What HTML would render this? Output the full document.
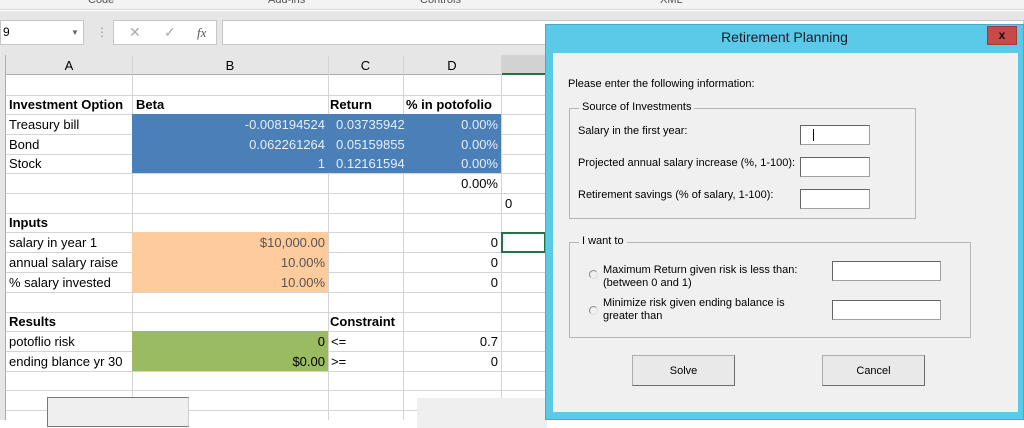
<!DOCTYPE html>
<html><head><style>
*{margin:0;padding:0;box-sizing:border-box}
body{width:1024px;height:420px;overflow:hidden;background:#fff;font-family:"Liberation Sans",sans-serif;position:relative}
.a{position:absolute;white-space:nowrap}
.c{position:absolute;font-size:13px;line-height:19px;color:#000}
.r{text-align:right}
.b{font-weight:bold}
.hl{position:absolute;height:1px;background:#d4d4d4;left:6px;width:540px}
.vl{position:absolute;width:1px;background:#d4d4d4;top:56px;height:364px}
.d{font-size:11px;color:#000;position:absolute;white-space:nowrap}
.in{position:absolute;background:#fff;border:1px solid #a0a0a0;border-top-color:#646464;border-left-color:#646464}
.btn{position:absolute;background:#e9e9e9;border:1px solid #adadad;border-right-color:#6e6e6e;border-bottom-color:#6e6e6e;font-size:11px;text-align:center;line-height:31px}
</style></head><body>
<div class="a" style="left:0;top:0;width:1024px;height:10px;background:#f3f3f3;border-bottom:1px solid #d6d6d6"></div>
<div class="a" style="left:88px;top:-6px;font-size:11px;color:#555">Code</div>
<div class="a" style="left:268px;top:-6px;font-size:11px;color:#555">Add-ins</div>
<div class="a" style="left:420px;top:-6px;font-size:11px;color:#555">Controls</div>
<div class="a" style="left:660px;top:-6px;font-size:11px;color:#555">XML</div>
<div class="a" style="left:0;top:11px;width:1024px;height:45px;background:#e6e6e6"></div>
<div class="a" style="left:0;top:20px;width:84px;height:25px;background:#fff;border:1px solid #c6c6c6;font-size:12px;line-height:23px;padding-left:2px">9<span style="position:absolute;left:70px;font-size:8px;color:#666">▼</span></div>
<div class="a" style="left:96px;top:25px;color:#999;font-size:12px">⋮</div>
<div class="a" style="left:113px;top:20px;width:104px;height:25px;background:#fff;border:1px solid #c6c6c6;font-size:14px;line-height:23px;color:#aaa"><span style="position:absolute;left:15px">✕</span><span style="position:absolute;left:50px">✓</span><span style="position:absolute;left:83px;font-style:italic;font-family:'Liberation Serif';color:#555;font-size:13px">fx</span></div>
<div class="a" style="left:222px;top:20px;width:802px;height:25px;background:#fff;border:1px solid #c6c6c6"></div>
<div class="a" style="left:0;top:55px;width:1024px;height:20px;background:#e6e6e6;border-bottom:1px solid #ababab"></div>
<div class="a" style="left:0;top:55px;width:6px;height:365px;background:#e6e6e6;border-right:1px solid #ababab"></div>
<div class="a" style="left:501px;top:55px;width:45px;height:20px;background:#d2d2d2;border-bottom:2px solid #217346"></div>
<div class="c" style="left:6px;top:56px;width:126px;text-align:center">A</div>
<div class="c" style="left:132px;top:56px;width:196px;text-align:center">B</div>
<div class="c" style="left:328px;top:56px;width:75px;text-align:center">C</div>
<div class="c" style="left:403px;top:56px;width:98px;text-align:center">D</div>
<div class="hl" style="top:95px"></div><div class="hl" style="top:114px"></div><div class="hl" style="top:134px"></div><div class="hl" style="top:154px"></div><div class="hl" style="top:173px"></div><div class="hl" style="top:193px"></div><div class="hl" style="top:213px"></div><div class="hl" style="top:232px"></div><div class="hl" style="top:252px"></div><div class="hl" style="top:272px"></div><div class="hl" style="top:292px"></div><div class="hl" style="top:312px"></div><div class="hl" style="top:331px"></div><div class="hl" style="top:351px"></div><div class="hl" style="top:371px"></div><div class="hl" style="top:390px"></div><div class="hl" style="top:410px"></div>
<div class="vl" style="left:132px"></div><div class="vl" style="left:328px"></div><div class="vl" style="left:403px"></div><div class="vl" style="left:501px"></div>
<div class="a" style="left:132px;top:114px;width:369px;height:59px;background:#4a7fb8"></div>
<div class="a" style="left:132px;top:232px;width:196px;height:60px;background:#fecb9c"></div>
<div class="a" style="left:132px;top:331px;width:196px;height:40px;background:#9bbb62"></div>
<div class="a" style="left:501px;top:232px;width:45px;height:21px;border:2px solid #217346"></div>
<div class="c b" style="left:9px;top:95px">Investment Option</div>
<div class="c b" style="left:136px;top:95px">Beta</div>
<div class="c b" style="left:330px;top:95px">Return</div>
<div class="c b" style="left:406px;top:95px">% in potofolio</div>
<div class="c" style="left:9px;top:115px">Treasury bill</div>
<div class="c" style="left:9px;top:135px">Bond</div>
<div class="c" style="left:9px;top:154px">Stock</div>
<div class="c r" style="left:132px;top:115px;width:193px;color:#e8eef6">-0.008194524</div>
<div class="c r" style="left:132px;top:135px;width:193px;color:#e8eef6">0.062261264</div>
<div class="c r" style="left:132px;top:154px;width:193px;color:#e8eef6">1</div>
<div class="c" style="left:336px;top:115px;color:#e8eef6">0.03735942</div>
<div class="c" style="left:336px;top:135px;color:#e8eef6">0.05159855</div>
<div class="c" style="left:336px;top:154px;color:#e8eef6">0.12161594</div>
<div class="c r" style="left:403px;top:115px;width:95px;color:#e8eef6">0.00%</div>
<div class="c r" style="left:403px;top:135px;width:95px;color:#e8eef6">0.00%</div>
<div class="c r" style="left:403px;top:154px;width:95px;color:#e8eef6">0.00%</div>
<div class="c r" style="left:403px;top:174px;width:95px">0.00%</div>
<div class="c" style="left:505px;top:194px">0</div>
<div class="c b" style="left:9px;top:213px">Inputs</div>
<div class="c" style="left:9px;top:233px">salary in year 1</div>
<div class="c" style="left:9px;top:253px">annual salary raise</div>
<div class="c" style="left:9px;top:273px">% salary invested</div>
<div class="c r" style="left:132px;top:233px;width:193px;color:#555">$10,000.00</div>
<div class="c r" style="left:132px;top:253px;width:193px;color:#555">10.00%</div>
<div class="c r" style="left:132px;top:273px;width:193px;color:#555">10.00%</div>
<div class="c r" style="left:403px;top:233px;width:95px">0</div>
<div class="c r" style="left:403px;top:253px;width:95px">0</div>
<div class="c r" style="left:403px;top:273px;width:95px">0</div>
<div class="c b" style="left:9px;top:312px">Results</div>
<div class="c b" style="left:330px;top:312px">Constraint</div>
<div class="c" style="left:9px;top:332px">potoflio risk</div>
<div class="c" style="left:9px;top:352px">ending blance yr 30</div>
<div class="c r" style="left:132px;top:332px;width:193px">0</div>
<div class="c r" style="left:132px;top:352px;width:193px">$0.00</div>
<div class="c" style="left:331px;top:332px">&lt;=</div>
<div class="c" style="left:331px;top:352px">&gt;=</div>
<div class="c r" style="left:403px;top:332px;width:95px">0.7</div>
<div class="c r" style="left:403px;top:352px;width:95px">0</div>
<div class="a" style="left:47px;top:397px;width:142px;height:30px;background:#efefef;border:1px solid #777;border-right-color:#ccc"></div>
<div class="a" style="left:417px;top:398px;width:130px;height:30px;background:#efefef"></div>
<div class="a" style="left:545px;top:24px;width:479px;height:396px;background:#5bcae8;border:1px solid #4aa8c8"></div>
<div class="a" style="left:545px;top:29px;width:479px;text-align:center;font-size:14px;color:#1a1a2a">Retirement Planning</div>
<div class="a" style="left:987px;top:26px;width:30px;height:19px;background:#c74a48;border:1px solid #a03a38;color:#111;font-weight:bold;font-size:12px;text-align:center;line-height:17px">x</div>
<div class="a" style="left:553px;top:53px;width:465px;height:359px;background:#f0f0f0"></div>
<div class="d" style="left:568px;top:78px">Please enter the following information:</div>
<div class="a" style="left:569px;top:108px;width:347px;height:111px;border:1px solid #b5b5b5"></div>
<div class="d" style="left:579px;top:101px;background:#f0f0f0;padding:0 3px">Source of Investments</div>
<div class="d" style="left:578px;top:125px">Salary in the first year:</div>
<div class="d" style="left:578px;top:157px">Projected annual salary increase (%, 1-100):</div>
<div class="d" style="left:578px;top:189px">Retirement savings (% of salary, 1-100):</div>
<div class="in" style="left:800px;top:125px;width:70px;height:20px"><div style="position:absolute;left:12px;top:3px;width:1px;height:12px;background:#000"></div></div>
<div class="in" style="left:800px;top:157px;width:70px;height:20px"></div>
<div class="in" style="left:800px;top:189px;width:70px;height:20px"></div>
<div class="a" style="left:569px;top:242px;width:402px;height:96px;border:1px solid #b5b5b5"></div>
<div class="d" style="left:579px;top:235px;background:#f0f0f0;padding:0 3px">I want to</div>
<div class="a" style="left:589px;top:270px;width:9px;height:9px;border-radius:50%;border:1px solid #888;border-right-color:#ddd;border-bottom-color:#ddd"></div>
<div class="d" style="left:603px;top:264px;line-height:13px">Maximum Return given risk is less than:<br>(between 0 and 1)</div>
<div class="a" style="left:589px;top:306px;width:9px;height:9px;border-radius:50%;border:1px solid #888;border-right-color:#ddd;border-bottom-color:#ddd"></div>
<div class="d" style="left:603px;top:297px;line-height:13px">Minimize risk given ending balance is<br>greater than</div>
<div class="in" style="left:832px;top:261px;width:109px;height:20px"></div>
<div class="in" style="left:832px;top:300px;width:109px;height:20px"></div>
<div class="btn" style="left:632px;top:355px;width:103px;height:31px">Solve</div>
<div class="btn" style="left:822px;top:355px;width:103px;height:31px">Cancel</div>
</body></html>
